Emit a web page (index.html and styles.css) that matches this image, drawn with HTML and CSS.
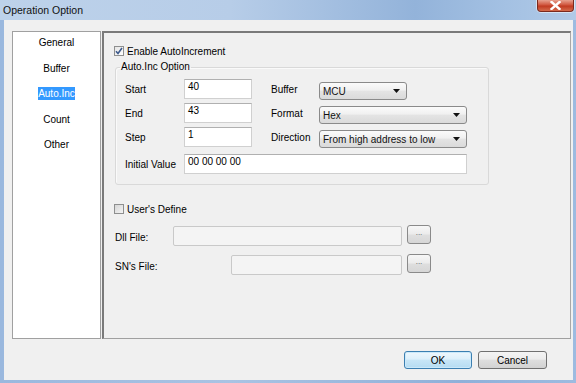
FILE: index.html
```html
<!DOCTYPE html>
<html lang="en">
<head>
    <meta charset="UTF-8">
    <title>Operation Option</title>
    <link rel="stylesheet" href="styles.css">
</head>
<body>

    <div class="window">
        <!-- Title Bar -->
        <div class="titlebar">
            <span class="title">Operation Option</span>
            <span class="close-btn">
                <svg width="11" height="9" viewBox="0 0 11 9">
                    <path d="M1.5 1 L9.5 8 M9.5 1 L1.5 8" stroke="#fff" stroke-width="2.4" stroke-linecap="square"/>
                </svg>
            </span>
        </div>

        <div class="client">
            <div class="main">
                <!-- Page List -->
                <ul class="nav">
                    <li>General</li>
                    <li>Buffer</li>
                    <li><span class="selected">Auto.Inc</span></li>
                    <li>Count</li>
                    <li>Other</li>
                </ul>

                <!-- Page Content -->
                <div class="panel">
                    <div class="check-row">
                        <span class="checkbox checked">
                            <svg width="8" height="8" viewBox="0 0 8 8">
                                <path d="M1 4.2 L3 6.5 L7 1" fill="none" stroke="#3d5a8c" stroke-width="1.6"/>
                            </svg>
                        </span>
                        Enable AutoIncrement
                    </div>

                    <fieldset class="group">
                        <legend>Auto.Inc Option</legend>
                        <div class="grid">
                            <span class="lbl">Start</span>
                            <div class="edit">40</div>
                            <span class="lbl">Buffer</span>
                            <div class="combo short"><span>MCU</span><svg width="7" height="4" viewBox="0 0 7 4"><path d="M0 0 H7 L3.5 4 Z" fill="#111"/></svg></div>

                            <span class="lbl">End</span>
                            <div class="edit">43</div>
                            <span class="lbl">Format</span>
                            <div class="combo"><span>Hex</span><svg width="7" height="4" viewBox="0 0 7 4"><path d="M0 0 H7 L3.5 4 Z" fill="#111"/></svg></div>

                            <span class="lbl">Step</span>
                            <div class="edit">1</div>
                            <span class="lbl">Direction</span>
                            <div class="combo"><span>From high address to low</span><svg width="7" height="4" viewBox="0 0 7 4"><path d="M0 0 H7 L3.5 4 Z" fill="#111"/></svg></div>

                            <span class="lbl last">Initial Value</span>
                            <div class="edit wide last">00 00 00 00</div>
                        </div>
                    </fieldset>

                    <div class="check-row user-row">
                        <span class="checkbox"></span>
                        User's Define
                    </div>

                    <div class="file-row">
                        <span class="file-lbl">Dll File:</span>
                        <div class="edit disabled dll"></div>
                        <button class="browse">...</button>
                    </div>

                    <div class="file-row sn-row">
                        <span class="file-lbl">SN's File:</span>
                        <div class="edit disabled sn"></div>
                        <button class="browse">...</button>
                    </div>
                </div>
            </div>

            <!-- Dialog Buttons -->
            <div class="footer">
                <button class="btn default">OK</button>
                <button class="btn cancel">Cancel</button>
            </div>
        </div>
    </div>

</body>
</html>
```

FILE: styles.css
```css
/* General Styling */
body {
    margin: 0;
    font-family: 'Liberation Sans', Arial, sans-serif;
    font-size: 10px;
    color: #000;
    background: #fff;
}

/* Window Frame */
.window {
    width: 576px;
    height: 383px;
    display: flex;
    flex-direction: column;
    background: linear-gradient(to right, #9ab8de, #a9c3e3 40%, #8fb0d9 80%, #9dbbe0);
}

.titlebar {
    height: 20px;
    flex-shrink: 0;
    display: flex;
    align-items: flex-start;
    background: linear-gradient(to right, #bdd2ea 0%, #b7cde8 40%, #93b3da 72%, #a4c1e3 88%, #b1cae7 100%);
}

.title {
    margin: 4px 0 0 3px;
    font-size: 10.5px;
    line-height: 12px;
    color: #111;
}

.close-btn {
    margin-left: auto;
    margin-right: 2px;
    width: 37px;
    height: 12px;
    box-sizing: border-box;
    border: 1px solid #7b2a1e;
    border-top: none;
    border-radius: 0 0 4px 4px;
    background: linear-gradient(#e7a08f, #d0563e 45%, #c13a22 55%, #d46b4c);
    box-shadow: 0 0 0 1px rgba(255, 255, 255, 0.5);
    display: flex;
    align-items: center;
    justify-content: center;
}

/* Client Area */
.client {
    flex: 1;
    margin: 0 3px 3px 4px;
    padding: 11px 0 0 8px;
    background: #f0f0f0;
    display: flex;
    flex-direction: column;
}

.main {
    display: flex;
    gap: 1px;
    height: 308px;
    margin-right: 2px;
}

/* Page List */
.nav {
    width: 89px;
    box-sizing: border-box;
    margin: 0;
    padding: 4px 0 0;
    list-style: none;
    background: #fff;
    border: 1px solid #a0a0a0;
    display: flex;
    flex-direction: column;
    gap: 11.6px;
    text-align: center;
}

.nav li {
    line-height: 14px;
}

.nav .selected {
    display: inline-block;
    background: #3399ff;
    color: #fff;
    line-height: 13px;
}

/* Page Content */
.panel {
    flex: 1;
    box-sizing: border-box;
    border-style: solid;
    border-width: 2px 1px 1px 2px;
    border-color: #7a7a7a #a8a8a8 #a0a0a0 #7a7a7a;
    padding: 11px 0 0 10px;
}

.check-row {
    display: flex;
    align-items: center;
    gap: 3px;
    height: 14px;
}

.checkbox {
    width: 10px;
    height: 10px;
    box-sizing: border-box;
    border: 1px solid #8e8f8f;
    background: linear-gradient(135deg, #d6d6d6, #f4f4f4);
    display: flex;
    align-items: center;
    justify-content: center;
}

.checkbox.checked {
    background: linear-gradient(135deg, #e4e4e4, #ffffff);
}

.user-row {
    margin-top: 17px;
}

/* Group Box */
.group {
    margin: 3px 0 0 1px;
    width: 374px;
    box-sizing: border-box;
    padding: 0;
    border: 1px solid #d9d9d9;
    border-radius: 3px;
    box-shadow: inset 1px 1px 0 #fafafa;
}

.group legend {
    margin-left: 4px;
    padding: 0 1px;
    line-height: 12px;
}

.grid {
    display: grid;
    grid-template-columns: 60px 86px 49px 148px;
    grid-template-rows: 20px 20px 20px auto;
    row-gap: 4px;
    align-items: center;
    padding: 6px 20px 10px 8px;
}

.grid .last {
    margin-top: 3px;
}

.lbl {
    padding-left: 1px;
}

/* Edit Boxes */
.edit {
    width: 68px;
    height: 20px;
    box-sizing: border-box;
    padding: 1px 3px;
    line-height: 12px;
    background: #fff;
    border: 1px solid #d0d0d0;
    border-top-color: #b0b0b0;
}

.edit.wide {
    grid-column: 2 / span 3;
    width: 283px;
}

.edit.disabled {
    background: #f4f4f4;
    border: 1px solid #c9c9c9;
    border-radius: 2px;
    margin-top: 1px;
}

.edit.dll {
    width: 229px;
}

.edit.sn {
    width: 171px;
}

/* Combo Boxes */
.combo {
    align-self: start;
    margin-top: 3px;
    height: 18px;
    box-sizing: border-box;
    padding: 0 6px 0 3px;
    border: 1px solid #8a8a8a;
    border-radius: 3px;
    background: linear-gradient(#fbfbfb, #f0f0f0 45%, #e4e4e4 50%, #dadada);
    display: flex;
    align-items: center;
    justify-content: space-between;
    color: #111;
}

.combo.short {
    width: 88px;
}

/* File Rows */
.file-row {
    display: flex;
    align-items: flex-start;
    width: 316px;
    height: 21px;
    margin: 9px 0 0 1px;
}

.sn-row {
    margin-top: 8px;
}

.file-lbl {
    margin-top: 6px;
    line-height: 14px;
    margin-right: auto;
}

.browse {
    width: 24px;
    height: 19px;
    margin-left: 5px;
    padding: 0 0 4px;
    font-family: inherit;
    font-size: 8px;
    color: #555;
    border: 1px solid #8a8a8a;
    border-radius: 3px;
    background: linear-gradient(#f7f7f7, #ececec 45%, #dedede 55%, #d6d6d6);
}

/* Dialog Buttons */
.footer {
    display: flex;
    justify-content: flex-end;
    gap: 6px;
    margin-top: 12px;
    padding-right: 26px;
}

.btn {
    width: 68px;
    height: 18px;
    box-sizing: border-box;
    padding: 0;
    font-family: inherit;
    font-size: 10px;
    color: #000;
    border: 1px solid #707070;
    border-radius: 3px;
    background: linear-gradient(#f4f4f4, #ececec 45%, #dedede 50%, #d2d2d2);
}

.btn.cancel {
    width: 69px;
}

.btn.default {
    border-color: #3c7fb1;
    background: linear-gradient(#eef7fd, #ddf0fb 45%, #c8e6f7 50%, #b5dcf2);
    box-shadow: inset 0 0 0 1px #cbe9fa;
}
```
